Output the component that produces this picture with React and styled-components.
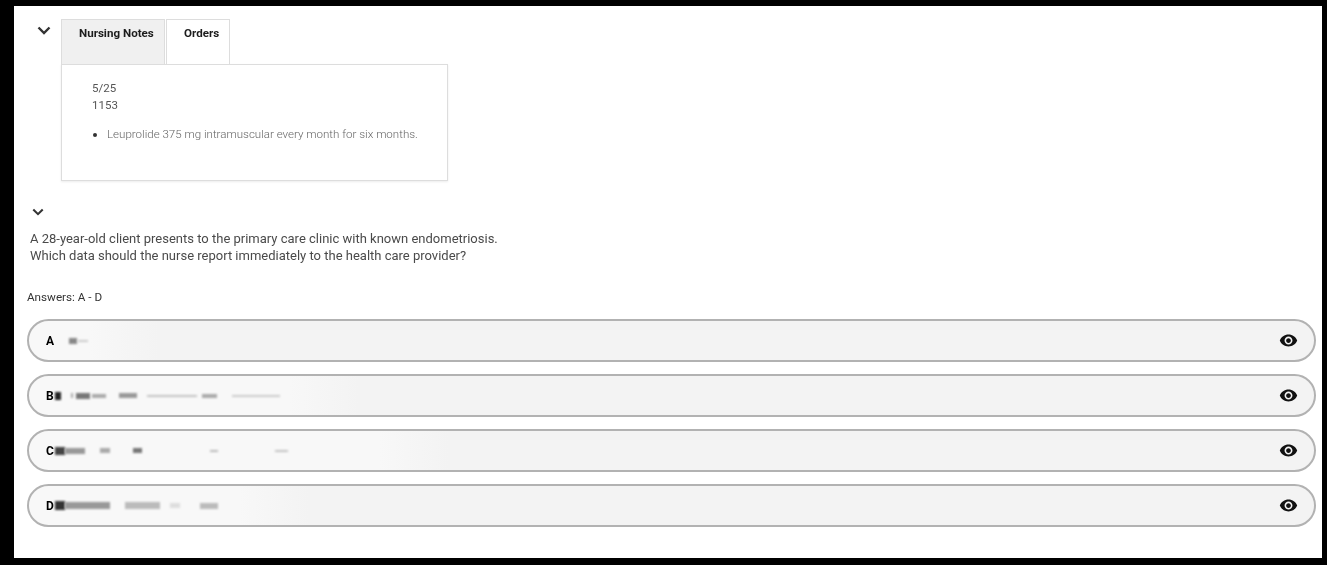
import React from 'react'
import styled, { createGlobalStyle } from 'styled-components'
import { MdVisibility } from 'react-icons/md'

const GlobalStyle = createGlobalStyle`
  html, body {
    margin: 0;
    padding: 0;
    background: #000;
  }
  body {
    font-family: Roboto, "Liberation Sans", sans-serif;
    color: #333;
  }
`

const Frame = styled.div`
  width: 1327px;
  height: 565px;
  box-sizing: border-box;
  padding: 6px 5px 7px 14px;
  overflow: hidden;
`

const Sheet = styled.main`
  height: 552px;
  box-sizing: border-box;
  background: #fff;
  padding: 13px 6px 0 13px;
  display: flex;
  flex-direction: column;
  filter: blur(0.3px);
`

const ChartSection = styled.section`
  display: flex;
  align-items: flex-start;
  margin-left: 10px;
`

const Toggle = styled.svg`
  display: block;
  flex: none;
  fill: none;
  stroke: #333;
  stroke-width: 2.4;
`

const ChartToggle = styled(Toggle)`
  width: 14px;
  height: 9px;
  margin: 7px 10px 0 0;
`

const Chart = styled.div`
  width: 387px;
`

const Tabs = styled.div`
  display: flex;
  gap: 1px;
  height: 45px;
`

const Tab = styled.div`
  box-sizing: border-box;
  width: ${props => props.$width}px;
  border: 1px solid #ddd;
  border-bottom: none;
  background: ${props => (props.$active ? '#f0f0f0' : '#fff')};
  font-size: 11.6px;
  font-weight: 700;
  line-height: 14px;
  color: #1c1c1c;
  padding: 6px 0 0 17px;
`

const Panel = styled.div`
  box-sizing: border-box;
  height: 117px;
  border: 1px solid #ddd;
  box-shadow: 0 1px 2px rgba(0, 0, 0, 0.08);
  padding: 15px 30px 0;
  font-size: 11.5px;
  line-height: 17px;
  color: #555;
`

const NoteList = styled.ul`
  margin: 12px 0 0;
  padding: 0 0 0 15px;
  font-size: 11.55px;
  font-weight: 300;
  color: #666;
  white-space: nowrap;

  li::marker {
    color: #333;
  }
`

const StemToggle = styled(Toggle)`
  width: 12px;
  height: 8px;
  margin: 27px 0 0 5px;
`

const Stem = styled.p`
  margin: 14px 0 0 3px;
  font-size: 13px;
  line-height: 17px;
  color: #4a4a4a;
`

const AnswerRange = styled.div`
  margin-top: 26px;
  font-size: 11.7px;
  line-height: 14px;
  color: #333;
`

const AnswerList = styled.div`
  margin-top: 15px;
  display: flex;
  flex-direction: column;
  gap: 12px;
`

const Answer = styled.div`
  box-sizing: border-box;
  height: 43px;
  display: flex;
  align-items: center;
  padding: 0 16px 0 17px;
  border: 2px solid #b2b2b2;
  border-radius: 22px;
  background: linear-gradient(
    90deg,
    #f8f8f8 0,
    #f8f8f8 ${props => props.$glow}px,
    #f3f3f3 ${props => props.$glow + 70}px
  );
`

const Letter = styled.span`
  flex: none;
  width: 9px;
  font-size: 12px;
  font-weight: 700;
  color: #000;
`

const Smudges = styled.span`
  flex: 1;
  display: flex;
  align-items: center;
`

const Smudge = styled.i`
  display: block;
  flex: none;
  margin-left: ${props => props.$offset}px;
  width: ${props => props.$width}px;
  height: ${props => props.$height}px;
  background: ${props => props.$color};
  filter: blur(0.8px);
`

const Eye = styled(MdVisibility)`
  flex: none;
  width: 19px;
  height: 19px;
  color: #111;
`

// the answer wording is smeared out in the picture: [gap, width, height, colour]
const answers = [
  { letter: 'A', glow: 60, marks: [[14, 8, 6, '#888'], [1, 10, 2, '#ccc']] },
  {
    letter: 'B',
    glow: 260,
    marks: [
      [0, 6, 8, '#222'], [10, 2, 5, '#aaa'], [3, 14, 6, '#777'], [2, 14, 4, '#aaa'],
      [13, 18, 5, '#999'], [10, 50, 2, '#c4c4c4'], [5, 15, 4, '#aaa'], [15, 48, 2, '#ccc'],
    ],
  },
  {
    letter: 'C',
    glow: 350,
    marks: [
      [0, 10, 8, '#444'], [0, 20, 6, '#999'], [15, 10, 5, '#aaa'], [23, 9, 5, '#777'],
      [68, 8, 2, '#bbb'], [57, 13, 2, '#c4c4c4'],
    ],
  },
  {
    letter: 'D',
    glow: 210,
    marks: [
      [0, 10, 9, '#333'], [0, 45, 7, '#999'], [15, 35, 7, '#bbb'], [10, 10, 5, '#ddd'],
      [20, 18, 6, '#bbb'],
    ],
  },
]

export default function App() {
  return (
    <Frame>
      <GlobalStyle />
      <Sheet>
        <ChartSection>
          <ChartToggle viewBox="0 0 14 9">
            <path d="M1.5 1.5 7 7l5.5-5.5" />
          </ChartToggle>
          <Chart>
            <Tabs>
              <Tab $active $width={104}>Nursing Notes</Tab>
              <Tab $width={64}>Orders</Tab>
            </Tabs>
            <Panel>
              5/25
              <br />
              1153
              <NoteList>
                <li>Leuprolide 375 mg intramuscular every month for six months.</li>
              </NoteList>
            </Panel>
          </Chart>
        </ChartSection>

        <StemToggle viewBox="0 0 14 9">
          <path d="M1.5 1.5 7 7l5.5-5.5" />
        </StemToggle>
        <Stem>
          A 28-year-old client presents to the primary care clinic with known endometriosis.
          <br />
          Which data should the nurse report immediately to the health care provider?
        </Stem>

        <AnswerRange>Answers: A - D</AnswerRange>
        <AnswerList>
          {answers.map(answer => (
            <Answer key={answer.letter} $glow={answer.glow}>
              <Letter>{answer.letter}</Letter>
              <Smudges>
                {answer.marks.map(([offset, width, height, color], i) => (
                  <Smudge key={i} $offset={offset} $width={width} $height={height} $color={color} />
                ))}
              </Smudges>
              <Eye />
            </Answer>
          ))}
        </AnswerList>
      </Sheet>
    </Frame>
  )
}
